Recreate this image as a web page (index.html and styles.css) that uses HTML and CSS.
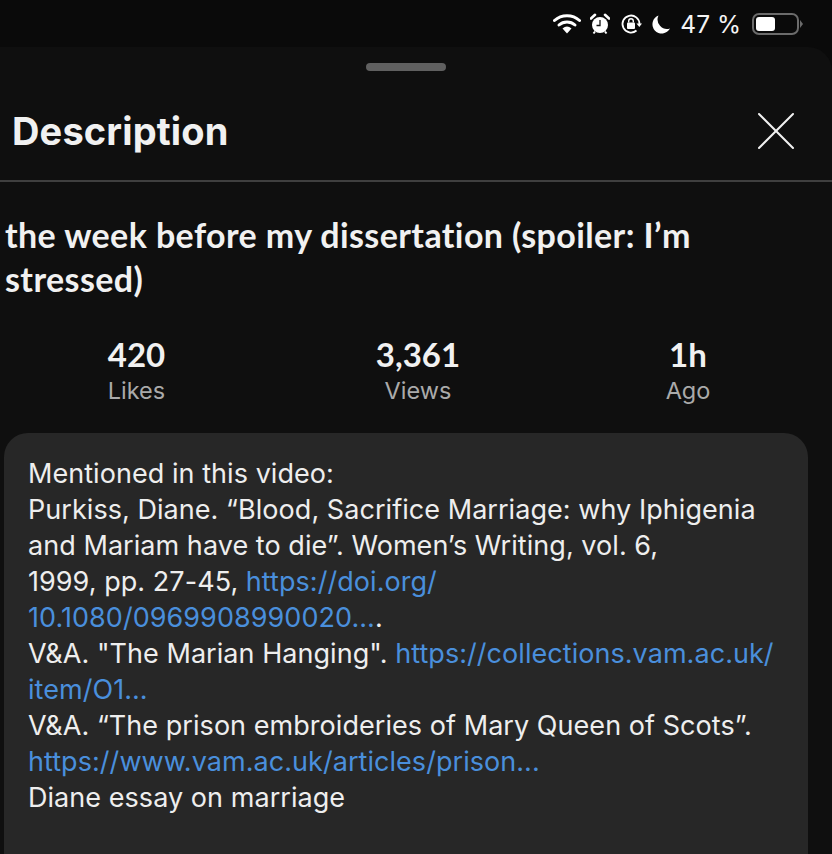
FILE: index.html
```html
<!DOCTYPE html>
<html lang="en">
<head>
    <meta charset="UTF-8">
    <meta name="viewport" content="width=device-width, initial-scale=1.0">
    <title>Description</title>
    <link rel="stylesheet" href="styles.css">
</head>
<body>
    <div class="status-bar">
        <svg class="icon-wifi" width="28" height="22" viewBox="0 0 28 22">
            <path d="M1.5 7.5C8.5 1 19.5 1 26.5 7.5" fill="none" stroke="#fff" stroke-width="3" stroke-linecap="round"/>
            <path d="M6 12C10.500 8 17.500 8 22 12" fill="none" stroke="#fff" stroke-width="3" stroke-linecap="round"/>
            <path d="M9.500 15.500Q14 11.500 18.500 15.500L14 20.500Z" fill="#fff"/>
        </svg>
        <svg class="icon-alarm" width="20" height="22" viewBox="0 0 20 22">
            <circle cx="10" cy="12" r="8" fill="#fff"/>
            <path d="M1 5.500L5 1.800M19 5.500L15 1.800" stroke="#fff" stroke-width="2.600" stroke-linecap="round"/>
            <path d="M3.500 20.500L5 18.500M16.500 20.500L15 18.500" stroke="#fff" stroke-width="2"/>
            <path d="M10 7V12.500H6.500" fill="none" stroke="#111" stroke-width="1.300"/>
        </svg>
        <svg class="icon-lock" width="22" height="22" viewBox="0 0 22 22">
            <path d="M19.500 11A8.500 8.500 0 1 0 16.500 17.500" fill="none" stroke="#fff" stroke-width="1.800"/>
            <path d="M16.500 10.500H22L19.300 14Z" fill="#fff"/>
            <rect x="7" y="9.500" width="8" height="6.500" rx="1" fill="#fff"/>
            <path d="M8.700 9.500V8A2.300 2.300 0 0 1 13.300 8V9.500" fill="none" stroke="#fff" stroke-width="1.400"/>
        </svg>
        <svg class="icon-moon" width="20" height="22" viewBox="0 0 20 22">
            <path d="M7.500 2.500A9.300 9.300 0 1 0 19 15.500A9.500 9.500 0 0 1 7.500 2.500Z" fill="#fff"/>
        </svg>
        <span class="battery-text">47 %</span>
        <div class="battery">
            <div class="battery-level"></div>
        </div>
        <div class="battery-tip"></div>
    </div>

    <div class="sheet">
        <div class="handle-row"><div class="handle"></div></div>

        <div class="sheet-header">
            <h1>Description</h1>
            <svg class="icon-close" width="38" height="38" viewBox="0 0 38 38">
                <path d="M2 2L36 36M36 2L2 36" stroke="#f1f1f1" stroke-width="2" stroke-linecap="round"/>
            </svg>
        </div>

        <h2 class="video-title">the week before my dissertation (spoiler: I’m stressed)</h2>

        <div class="stats">
            <div class="stat">
                <div class="stat-value">420</div>
                <div class="stat-label">Likes</div>
            </div>
            <div class="stat">
                <div class="stat-value">3,361</div>
                <div class="stat-label">Views</div>
            </div>
            <div class="stat">
                <div class="stat-value">1h</div>
                <div class="stat-label">Ago</div>
            </div>
        </div>

        <div class="desc-card">
            <div>Mentioned in this video:</div>
            <div>Purkiss, Diane. “Blood, Sacrifice Marriage: why Iphigenia<br>and Mariam have to die”. Women’s Writing, vol. 6,<br>1999, pp. 27-45, <a href="#">https://doi.org/<br>10.1080/0969908990020...</a>.</div>
            <div>V&amp;A. "The Marian Hanging". <a href="#">https://collections.vam.ac.uk/<br>item/O1...</a></div>
            <div>V&amp;A. “The prison embroideries of Mary Queen of Scots”.<br><a href="#">https://www.vam.ac.uk/articles/prison...</a></div>
            <div>Diane essay on marriage</div>
        </div>
    </div>
</body>
</html>
```

FILE: styles.css
```css
html, body {
    height: 100%;
}
body {
    margin: 0;
    background-color: #0a0a0a;
    color: #f1f1f1;
    font-family: Inter, "Liberation Sans", sans-serif;
    overflow: hidden;
}
.status-bar {
    height: 47px;
    display: flex;
    align-items: center;
    justify-content: flex-end;
    padding-right: 33px;
    box-sizing: border-box;
}
.icon-wifi {
    margin-right: 9px;
}
.icon-alarm {
    margin-right: 10px;
}
.icon-lock {
    margin-right: 9px;
}
.icon-moon {
    margin-right: 9px;
}
.battery-text {
    font-family: Inter, sans-serif;
    font-size: 24.5px;
    color: #f4f4f4;
    margin-right: 11px;
}
.battery {
    width: 47px;
    height: 22px;
    border: 2px solid #6b6b6b;
    border-radius: 7px;
    box-sizing: border-box;
    padding: 2px;
}
.battery-level {
    width: 19px;
    height: 100%;
    background-color: #fff;
    border-radius: 3px;
}
.battery-tip {
    width: 0;
    height: 0;
    margin-left: 1px;
    border-left: 3px solid #6b6b6b;
    border-top: 4px solid transparent;
    border-bottom: 4px solid transparent;
    margin-right: -4px;
}
.sheet {
    background-color: #0f0f0f;
    border-radius: 0 24px 0 0;
    height: 807px;
}
.handle-row {
    display: flex;
    justify-content: center;
    padding: 16px 20px 0 0;
}
.handle {
    width: 80px;
    height: 8px;
    background-color: #606060;
    border-radius: 4px;
}
.sheet-header {
    height: 111px;
    border-bottom: 2px solid #3f3f3f;
    display: flex;
    align-items: center;
    justify-content: space-between;
    padding: 10px 37px 0 12px;
    box-sizing: border-box;
}
h1 {
    margin: 0;
    font-size: 38px;
    font-weight: 700;
    letter-spacing: 0.15px;
}
.video-title {
    margin: 31px 0 0;
    padding: 0 5px;
    font-family: Lato, sans-serif;
    font-size: 34px;
    line-height: 44px;
    font-weight: 700;
    letter-spacing: 0.4px;
    width: 720px;
}
.stats {
    display: grid;
    grid-template-columns: 273px 290px 250px;
    margin-top: 34px;
    text-align: center;
}
.stat-value {
    font-size: 33px;
    line-height: 38px;
    font-family: Lato, sans-serif;
    font-weight: 700;
}
.stat-label {
    font-size: 23.5px;
    line-height: 32px;
    color: #aaaaaa;
    margin-top: 2px;
}
.desc-card {
    margin: 26px 24px 0 4px;
    background-color: #272727;
    border-radius: 24px 24px 0 0;
    padding: 23px 25px 0 24px;
    font-size: 27px;
    line-height: 36px;
    letter-spacing: 0.05px;
    height: 421px;
    box-sizing: border-box;
    color: #eeeeee;
}
.desc-card a {
    color: #4a8fdc;
    text-decoration: none;
}
```
